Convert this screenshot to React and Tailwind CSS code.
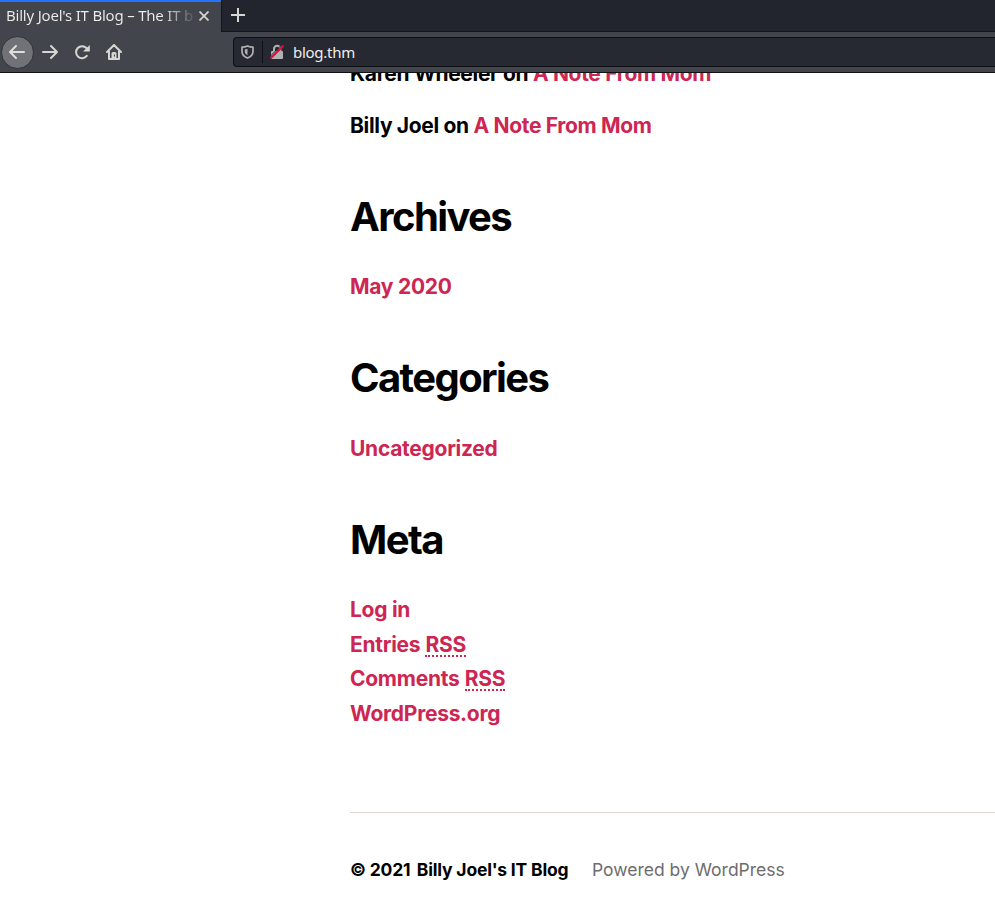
const LINK = "text-[#cd2653]";

function Section({ title, children, first }) {
  return (
    <section className={first ? "mt-[49px]" : "mt-[49.4px]"}>
      <h2 className="text-[40px] leading-[48px] font-bold tracking-[-0.04em] text-black">{title}</h2>
      <ul className="mt-[29.5px] text-[21px] leading-[34.6px] font-bold tracking-[-0.013em] text-[#cd2653]">{children}</ul>
    </section>
  );
}

function Rss() {
  return <abbr className="ml-[0.5px] inline-block h-[25px] border-b-2 border-dotted border-[#cd2653] leading-[25px] no-underline">RSS</abbr>;
}

function Tabs() {
  return (
    <div className="flex h-8 bg-[#23252e]">
      <div className="flex h-8 w-[221px] items-center border-t-2 border-[#2374ff] bg-[#42454c] pl-1.5">
        <div className="-mt-[3px] w-[187px] overflow-hidden bg-gradient-to-r from-[#eeeeec] from-[84%] to-[#42454c] to-[103%] bg-clip-text text-[15px] leading-[27px] tracking-[-0.014em] whitespace-nowrap text-transparent">
          Billy Joel's IT Blog – The IT b
        </div>
        <svg className="-mt-[3px] ml-[6px] h-[10px] w-[10px]" viewBox="0 0 10 10" fill="none" stroke="#d6d6d2" strokeWidth="1.7">
          <path d="M.5 .5l9 9M9.5 .5l-9 9" />
        </svg>
      </div>
      <div className="flex flex-1 items-start border-b border-l border-[#15161b] pt-2 pl-[9px]">
        <svg className="h-[14px] w-[14px]" viewBox="0 0 14 14" fill="none" stroke="#d6d6d2" strokeWidth="2">
          <path d="M7 0v14M0 7h14" />
        </svg>
      </div>
    </div>
  );
}

function Toolbar() {
  return (
    <div className="flex h-[41px] items-center border-b border-[#0f1014] bg-[#42454c]">
      <div className="ml-[0.5px] flex h-[33px] w-[33px] items-center justify-center rounded-full border border-[#303238] bg-[#717277]">
        <svg className="h-4 w-4" viewBox="0 0 16 16" fill="none" stroke="#dededa" strokeWidth="2" strokeLinecap="round" strokeLinejoin="round">
          <path d="M15 8H1M7 2L1 8l6 6" />
        </svg>
      </div>
      <svg className="ml-[8.500px] h-4 w-4" viewBox="0 0 16 16" fill="none" stroke="#d6d6d2" strokeWidth="2" strokeLinecap="round" strokeLinejoin="round">
        <path d="M1 8h14M9 2l6 6-6 6" />
      </svg>
      <svg className="ml-4 h-4 w-4" viewBox="0 0 16 16" fill="none" stroke="#d6d6d2" strokeWidth="2" strokeLinecap="round">
        <path d="M12.8 11.9A6 6 0 1 1 12.4 4" />
        <path d="M15.800 1v6.500H9z" fill="#d6d6d2" stroke="none" />
      </svg>
      <svg className="ml-4 h-4 w-4" viewBox="0 0 16 16" fill="none" stroke="#d6d6d2" strokeWidth="2" strokeLinecap="round" strokeLinejoin="round">
        <path d="M1 8l7-7 7 7M3 7v8h10V7" />
        <path d="M5.500 14.500V9.500a1.500 1.500 0 0 1 1.500-1.500h2a1.500 1.500 0 0 1 1.500 1.500v5z" fill="#d6d6d2" stroke="none" />
        <path d="M8.500 10.500v2" stroke="#42454c" strokeWidth="1" strokeLinecap="butt" />
      </svg>
      <div className="ml-[111px] flex h-[30px] flex-1 items-center rounded-l-[4px] border border-r-0 border-[#0f1014] bg-[#262832]">
        <svg className="ml-[7px] h-[14px] w-[13px]" viewBox="0 0 13 14" fill="none" stroke="#b0b1b3" strokeWidth="1.7">
          <path d="M6.500 1C4.900 1.700 3 2.100 1 2.100v4.200C1 9.800 3.300 11.900 6.500 13c3.200-1.100 5.500-3.200 5.500-6.700V2.100C10 2.100 8.100 1.700 6.500 1z" strokeLinejoin="round" />
          <path d="M6.500 3.700c-.8.300-1.700.5-2.700.6v2.200c0 1.800 1 2.900 2.700 3.700z" fill="#b0b1b3" stroke="none" />
        </svg>
        <div className="ml-2 h-[22px] w-px bg-[#0f1014]" />
        <svg className="ml-[7px] h-4 w-[14px]" viewBox="0 0 14 16">
          <path d="M4 8V5a3.200 3.200 0 0 1 6.400 0v3" fill="none" stroke="#b0b1b3" strokeWidth="2" />
          <rect x="1" y="7" width="12" height="8" rx="1" fill="#b0b1b3" />
          <path d="M0 12.500L12 .5" stroke="#262832" strokeWidth="1" />
          <path d="M.5 14.500L13.500 1.500" stroke="#f50338" strokeWidth="2" />
        </svg>
        <span className="ml-[9px] text-[15px] leading-5 tracking-[-0.018em] text-[#eeeeec]">blog.thm</span>
      </div>
    </div>
  );
}

export default function App() {
  return (
    <div className="flex h-[912px] w-[995px] flex-col overflow-hidden bg-white">
      <header className="relative z-10 shrink-0 font-['Noto_Sans',sans-serif]">
        <Tabs />
        <Toolbar />
      </header>
      <main className="min-h-0 flex-1 overflow-hidden pl-[350px] font-['Inter',sans-serif]">
        <ul className="-mt-[16px] flex flex-col gap-[17.4px] text-[21px] leading-[34.6px] font-bold tracking-[-0.0155em] text-black">
          <li>Karen Wheeler on <a className={LINK}>A Note From Mom</a></li>
          <li>Billy Joel on <a className={LINK}>A Note From Mom</a></li>
        </ul>
        <Section title="Archives" first>
          <li>May 2020</li>
        </Section>
        <Section title="Categories">
          <li>Uncategorized</li>
        </Section>
        <Section title="Meta">
          <li>Log in</li>
          <li className="h-[34.6px]">Entries <Rss /></li>
          <li className="h-[34.6px]">Comments <Rss /></li>
          <li>WordPress.org</li>
        </Section>
        <footer className="mt-[80.500px] flex border-t border-[#dcd7ca] pt-[43.500px] text-[17.5px] leading-7">
          <p className="w-[218px] font-bold tracking-[-0.011em] whitespace-nowrap text-black"><span className="mr-[2.5px]">© 2021</span> Billy Joel's IT Blog</p>
          <p className="ml-6 text-[#6d6d6d]">Powered by WordPress</p>
        </footer>
      </main>
    </div>
  );
}
